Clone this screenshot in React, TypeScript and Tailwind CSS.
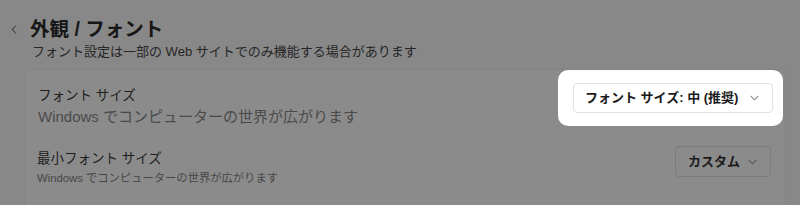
import React from "react";

const Chevron = ({ className }: { className?: string }) => (
  <svg viewBox="0 0 10 6" className={className} fill="none" stroke="currentColor" strokeWidth="1.2" strokeLinecap="round" strokeLinejoin="round">
    <path d="M1 1 L5 5 L9 1" />
  </svg>
);

export default function App() {
  return (
    <div
      className="w-[800px] h-[205px] overflow-hidden bg-[#888888] text-[#1c1c1c]"
      style={{ fontFamily: '"Liberation Sans", "Noto Sans CJK JP", sans-serif' }}
    >
      <div className="flex items-center h-[20px] mt-[19px]">
        <svg viewBox="0 0 6 10" className="w-[6px] h-[9px] ml-[11px] text-[#4e4e4e]" fill="none" stroke="currentColor" strokeWidth="1.2" strokeLinecap="round" strokeLinejoin="round">
          <path d="M5 1 L1 5 L5 9" />
        </svg>
        <h1 className="ml-[13px] text-[19.5px] leading-[20px] font-bold text-[#161616]">外観 / フォント</h1>
      </div>
      <p className="ml-[32px] mt-[5px] text-[13px] leading-[16px] text-[#262626]">
        フォント設定は一部の Web サイトでのみ機能する場合があります
      </p>
      <div className="ml-[25px] mt-[9px] w-[760px] h-[140px] bg-[#8b8b8b] border-l border-t border-r border-[#858585]">
        <div className="flex items-start justify-between pl-[12px] pr-[1px]">
          <div className="pt-[18px]">
            <div className="text-[13.5px] leading-[16px] text-[#1e1e1e]">フォント サイズ</div>
            <div className="mt-[3px] text-[15px] leading-[20px] text-[#4a4a4a]">
              Windows でコンピューターの世界が広がります
            </div>
          </div>
          <div className="w-[225px] h-[56px] bg-white rounded-[10px] pl-[15px] pr-[10px] pt-[13px]">
            <div className="h-[30px] w-[200px] rounded-[4px] border border-[#e2e2e2] flex items-center pl-[11px] pr-[13px] justify-between">
              <span className="text-[13px] font-bold text-[#1a1a1a]">フォント サイズ: 中 (推奨)</span>
              <Chevron className="w-[9px] h-[6px] text-[#8a8a8a]" />
            </div>
          </div>
        </div>
        <div className="flex items-start justify-between pl-[11px] pr-[13px] mt-[14px]">
          <div className="pt-[10px]">
            <div className="text-[13.5px] leading-[16px] text-[#1e1e1e]">最小フォント サイズ</div>
            <div className="mt-[4px] text-[11.3px] leading-[14px] text-[#474747]">
              Windows でコンピューターの世界が広がります
            </div>
          </div>
          <div className="mt-[5px] h-[31px] w-[96px] rounded-[4px] border border-[#7c7c7c] flex items-center pl-[12px] pr-[13px] justify-between">
            <span className="text-[13px] font-bold text-[#1c1c1c]">カスタム</span>
            <Chevron className="w-[9px] h-[6px] text-[#5a5a5a]" />
          </div>
        </div>
      </div>
    </div>
  );
}
